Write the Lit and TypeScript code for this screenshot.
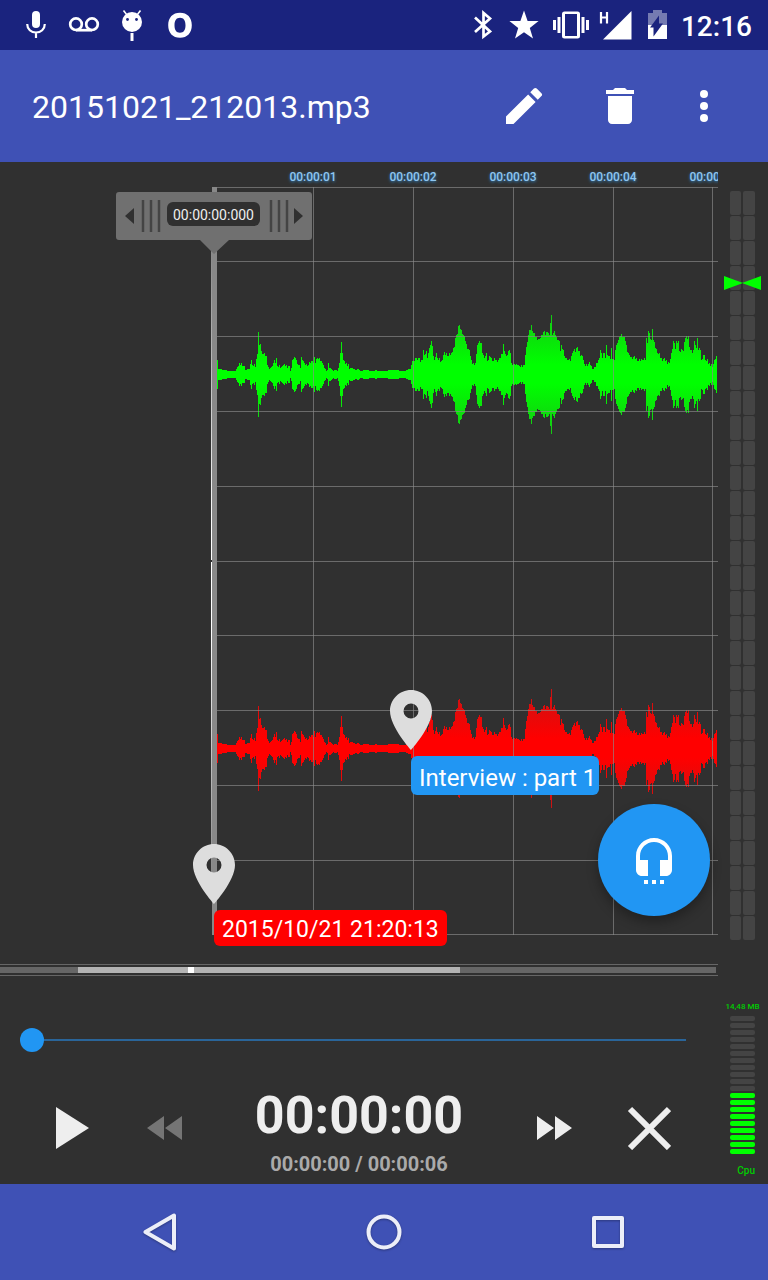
import { LitElement, html, svg, css } from "lit";
import { customElement, property } from "lit/decorators.js";

/* Envelope of the recording: [pixel offset, half height] pairs. */
const ENVELOPE: number[] = [
  0, 14, 1, 5, 8, 4, 10, 3, 18, 3, 20, 7, 24, 11, 26, 8, 28, 4, 32, 5, 34, 14, 35, 9, 38, 7, 40, 20, 41, 42, 42, 29,
  43, 30, 44, 23, 46, 20, 49, 18, 50, 9, 52, 5, 55, 8, 57, 14, 58, 11, 59, 16, 60, 8, 63, 6, 67, 10, 68, 8, 72, 8,
  73, 3, 74, 6, 75, 14, 78, 16, 80, 10, 83, 6, 84, 17, 85, 14, 87, 11, 90, 8, 93, 11, 95, 13, 96, 11, 97, 17, 98, 11,
  100, 16, 103, 13, 105, 11, 107, 6, 109, 3, 110, 4, 111, 11, 112, 6, 114, 5, 116, 3, 118, 4, 120, 3, 121, 6, 122, 11,
  123, 21, 124, 32, 125, 21, 126, 14, 127, 13, 128, 10, 131, 10, 132, 5, 134, 6, 138, 4, 141, 5, 143, 3, 148, 4,
  151, 4, 152, 3, 157, 3, 158, 4, 161, 3, 180, 4, 182, 3, 188, 3, 189, 4, 193, 5, 195, 13, 197, 13, 198, 16, 200, 14,
  201, 16, 203, 12, 205, 14, 206, 24, 207, 19, 209, 23, 210, 16, 212, 26, 213, 29, 214, 33, 215, 28, 216, 18, 217, 14,
  219, 21, 221, 14, 224, 13, 226, 19, 229, 21, 231, 18, 234, 21, 236, 26, 237, 27, 238, 36, 240, 40, 241, 48, 242, 49,
  243, 45, 245, 40, 247, 38, 250, 25, 252, 24, 254, 14, 257, 9, 258, 11, 259, 20, 260, 29, 262, 33, 264, 31, 265, 21,
  267, 16, 269, 21, 270, 13, 273, 17, 275, 13, 278, 14, 280, 12, 282, 16, 285, 20, 286, 30, 287, 23, 289, 18, 291, 23,
  293, 21, 294, 11, 297, 10, 300, 9, 302, 8, 307, 9, 308, 19, 310, 32, 311, 39, 313, 44, 314, 49, 316, 41, 318, 37,
  320, 34, 322, 35, 324, 39, 326, 42, 328, 39, 330, 42, 332, 39, 333, 51, 334, 59, 335, 39, 337, 43, 339, 37, 342, 33,
  343, 23, 344, 29, 346, 24, 347, 18, 350, 14, 353, 13, 355, 21, 356, 23, 358, 22, 360, 27, 361, 23, 363, 18, 365, 18,
  367, 10, 370, 8, 372, 12, 374, 8, 376, 5, 377, 7, 380, 11, 382, 16, 383, 24, 385, 16, 386, 21, 388, 16, 389, 29,
  390, 19, 393, 15, 394, 26, 395, 15, 397, 14, 398, 24, 400, 31, 402, 37, 404, 40, 406, 37, 408, 33, 410, 22, 412, 19,
  415, 15, 417, 18, 420, 13, 425, 14, 428, 14, 429, 36, 430, 31, 431, 43, 433, 35, 434, 34, 435, 45, 436, 34, 438, 26,
  440, 21, 444, 16, 448, 13, 452, 11, 454, 21, 456, 33, 458, 25, 459, 33, 461, 33, 462, 23, 465, 24, 466, 23, 468, 36,
  471, 38, 472, 27, 475, 21, 476, 24, 477, 33, 479, 26, 480, 36, 481, 24, 483, 24, 484, 14, 486, 19, 489, 13, 490, 15,
  491, 10, 493, 8, 496, 10, 497, 14, 499, 18, 500, 18,
];

const LANE_START = 217;

function lanePath(center: number): string {
  let d = "";
  let k = 0;
  for (let i = 0; i < 500; i++) {
    while (k + 4 < ENVELOPE.length && ENVELOPE[k + 2] <= i) k += 2;
    const [x0, a0, x1, a1] = ENVELOPE.slice(k, k + 4);
    const ripple = a0 > 6 && i !== x0 ? ((i * 7) % 5) - 2 : 0;
    const floor = i % 9 === 4 ? 3 : 2;
    const amp = Math.max(floor, Math.round(a0 + ((a1 - a0) * (i - x0)) / (x1 - x0) + ripple));
    d += `M${LANE_START + i} ${center - amp}h1v${amp * 2 + 1}h-1z`;
  }
  return d;
}

const GREEN_LANE = lanePath(187);
const RED_LANE = lanePath(561);
const ROWS = [0, 74, 149, 224, 299, 374, 448, 523, 598, 673, 747];
const COLUMNS = [313, 413, 513, 613, 712];
const SECONDS = ["00:00:01", "00:00:02", "00:00:03", "00:00:04", "00:00:05"];

@customElement("status-bar")
export class StatusBar extends LitElement {
  static styles = css`
    :host { display: flex; height: 50px; background: #1a237e; color: #fff; padding: 0 16px 0 12px; }
    svg { display: block; flex: none; fill: currentColor; }
    .spacer { flex: 1; }
    .clock { font-size: 28px; line-height: 54px; font-weight: 500; }
  `;
  render() {
    return html`
      <svg width="48" height="50" viewBox="12 0 48 50"><rect x="32" y="11" width="8" height="17" rx="4" /><path d="M27.200 24c0 5.200 4 8.500 8.800 8.500s8.800-3.300 8.800-8.500M36 32v6" fill="none" stroke="currentColor" stroke-width="2.200" /></svg>
      <svg width="48" height="50" viewBox="60 0 48 50"><g fill="none" stroke="currentColor" stroke-width="2.700"><circle cx="76" cy="24.200" r="5.800" /><circle cx="92" cy="24.200" r="5.800" /><path d="M76 30.200h16" /></g></svg>
      <svg width="48" height="50" viewBox="108 0 48 50"><circle cx="132" cy="22" r="10" /><path d="M127 15l-3.500-4.500M137 15l3.500-4.500" stroke="currentColor" stroke-width="1.600" /><path d="M130.500 33h3v8h-3z" /><g fill="#1a237e"><circle cx="127.500" cy="19.500" r="1.400" /><circle cx="136.500" cy="19.500" r="1.400" /></g></svg>
      <svg width="48" height="50" viewBox="156 0 48 50"><path fill-rule="evenodd" d="M180 12.700c7.300 0 11.800 4.800 11.800 12.500s-4.500 12.500-11.800 12.500-11.800-4.800-11.800-12.500 4.500-12.500 11.800-12.500zm0 5c-3.600 0-5.500 2.700-5.500 7.500s1.900 7.500 5.500 7.500 5.500-2.700 5.500-7.500-1.900-7.500-5.500-7.500z" /></svg>
      <span class="spacer"></span>
      <svg width="40" height="50" viewBox="463 0 40 50"><path d="M475 17.500l15 14-6.500 5V13l6.500 5.500-15 13.500" fill="none" stroke="currentColor" stroke-width="2.700" /></svg>
      <svg width="42" height="50" viewBox="503 0 42 50"><path d="M524 10.500l3.600 10.400 11 .2-8.800 6.800 3.200 10.600-9-6.300-9 6.300 3.200-10.600-8.800-6.800 11-.2z" /></svg>
      <svg width="52" height="50" viewBox="545 0 52 50"><path fill-rule="evenodd" d="M564.500 11.500h13a2.500 2.500 0 0 1 2.500 2.500v22a2.500 2.500 0 0 1-2.500 2.500h-13a2.500 2.500 0 0 1-2.500-2.500V14a2.500 2.500 0 0 1 2.500-2.500zM565 14v22h12V14z" /><path d="M553 20h3v10h-3zM557.500 17h3v16h-3zM586 20h3v10h-3zM581.500 17h3v16h-3z" /></svg>
      <svg width="38" height="50" viewBox="597 0 38 50"><path d="M631.500 11v28.500H603z" /><path d="M601 12v11.500M607 12v11.500M601 17.500h6" stroke="currentColor" stroke-width="2.200" fill="none" /></svg>
      <svg width="46" height="50" viewBox="635 0 46 50"><path fill-opacity=".4" d="M653 10h9v3h5v12h-19V13h5z" /><path d="M648 25h19v14h-19z" /><path d="M659 15.500v8h4l-9.500 13v-9h-3.500z" fill="#1a237e" /></svg>
      <span class="clock">12:16</span>
    `;
  }
}

@customElement("title-bar")
export class TitleBar extends LitElement {
  @property() heading = "";
  static styles = css`
    :host { display: flex; align-items: center; height: 112px; background: #3f51b5; color: #fff; padding: 0 40px 0 32px; }
    h1 { flex: 1; margin: 0; padding-top: 2px; font-size: 32px; line-height: 40px; font-weight: 400; }
    .action { border: 0; padding: 0; background: none; color: inherit; width: 48px; height: 48px; cursor: pointer; }
    .action svg { display: block; fill: currentColor; }
    .actions { display: flex; gap: 48px; }
    .more { margin-left: -12px; }
  `;
  render() {
    return html`
      <h1>${this.heading}</h1>
      <div class="actions">
        <button class="action" aria-label="Edit"><svg width="48" height="48" viewBox="0 0 24 24"><path d="M3 17.250V21h3.750L17.810 9.940l-3.750-3.750L3 17.250zM20.710 7.040a1 1 0 0 0 0-1.410l-2.340-2.340a1 1 0 0 0-1.410 0l-1.830 1.830 3.750 3.750 1.830-1.830z" /></svg></button>
        <button class="action" aria-label="Delete"><svg width="48" height="48" viewBox="0 0 24 24"><path d="M6 19c0 1.100.9 2 2 2h8c1.100 0 2-.9 2-2V7H6v12zM19 4h-3.500l-1-1h-5l-1 1H5v2h14V4z" /></svg></button>
        <button class="action more" aria-label="More options"><svg width="48" height="48" viewBox="0 0 24 24"><circle cx="12" cy="6" r="2" /><circle cx="12" cy="12" r="2" /><circle cx="12" cy="18" r="2" /></svg></button>
      </div>
    `;
  }
}

@customElement("wave-timeline")
export class WaveTimeline extends LitElement {
  static styles = css`
    :host { display: block; position: relative; }
    .ruler { display: flex; overflow: hidden; height: 25px; padding-left: 263px; }
    .tick { flex: none; width: 100px; text-align: center; font-size: 12px; line-height: 30px; font-weight: 500; color: #90c6f0; text-shadow: 0 1px 3px #2f80c0; }
    .plot { display: block; width: 100%; height: 748px; }
    .grid { stroke: #8c8c8c; stroke-opacity: .65; stroke-width: 1; }
    .lane { shape-rendering: crispEdges; }
    .handle { position: absolute; left: 116px; top: 30px; width: 196px; height: 62px; }
    .handle-shape { display: block; }
    .position { position: absolute; left: 51px; top: 10px; width: 93px; height: 24px; border-radius: 6px; background: #303030; color: #eee; font-size: 14px; line-height: 26px; text-align: center; }
    .pin { position: absolute; }
    .pin svg { display: block; fill: #ddd; }
    .pin-label { position: absolute; top: 66px; left: 21px; white-space: nowrap; color: #fff; border-radius: 6px; }
    .start { left: 193px; top: 682px; }
    .start .pin-label { background: #f00; font-size: 23px; padding: 3px 8px 0 8px; line-height: 33px; }
    .part { left: 390px; top: 528px; }
    .part .pin-label { background: #2196f3; font-size: 24px; padding: 6px 3px 0 8px; line-height: 33px; }
    .listen { position: absolute; right: 8px; top: 642px; width: 112px; height: 112px; padding: 0; border: 0; border-radius: 50%; background: #2196f3; box-shadow: 0 6px 12px rgba(0, 0, 0, .3); display: grid; place-items: center; cursor: pointer; }
    .listen svg { fill: #fff; }
  `;
  private pin(kind: string, label: string) {
    return html`<div class="pin ${kind}">
      <svg width="42" height="60" viewBox="5 2 14 20"><path d="M12 2C8.130 2 5 5.130 5 9c0 5.250 7 13 7 13s7-7.750 7-13c0-3.870-3.130-7-7-7zm0 9.500a2.500 2.500 0 0 1 0-5 2.500 2.500 0 0 1 0 5z" /></svg>
      <span class="pin-label">${label}</span>
    </div>`;
  }
  render() {
    return html`
      <div class="ruler">${SECONDS.map((s) => html`<span class="tick">${s}</span>`)}</div>
      <svg class="plot" role="img" aria-label="Stereo waveform">
        <defs>
          <linearGradient id="g" gradientUnits="userSpaceOnUse" x1="0" y1="127" x2="0" y2="247"><stop offset="0" stop-color="#14c814" /><stop offset=".42" stop-color="#0f0" /><stop offset=".58" stop-color="#0f0" /><stop offset="1" stop-color="#14c814" /></linearGradient>
          <linearGradient id="r" gradientUnits="userSpaceOnUse" x1="0" y1="501" x2="0" y2="621"><stop offset="0" stop-color="#c81414" /><stop offset=".42" stop-color="#f00" /><stop offset=".58" stop-color="#f00" /><stop offset="1" stop-color="#c81414" /></linearGradient>
          <linearGradient id="e" gradientUnits="userSpaceOnUse" x1="0" y1="60" x2="0" y2="690"><stop offset="0" stop-color="#888" /><stop offset=".45" stop-color="#fff" /><stop offset=".6" stop-color="#fff" /><stop offset="1" stop-color="#888" /></linearGradient>
        </defs>
        <path class="lane" d=${GREEN_LANE} fill="url(#g)" />
        <path class="lane" d=${RED_LANE} fill="url(#r)" />
        <g class="grid">
          ${ROWS.map((y) => svg`<line x1="217" x2="100%" y1=${y + 0.5} y2=${y + 0.5} />`)}
          ${COLUMNS.map((x) => svg`<line x1=${x + 0.5} x2=${x + 0.5} y1="0" y2="748" />`)}
        </g>
        <rect x="212" y="0" width="5" height="748" fill="#888" />
        <path d="M211 60h1v313h-1zM211 375h1v315h-1z" fill="url(#e)" />
      </svg>
      <div class="handle">
        <svg class="handle-shape" width="196" height="62" viewBox="0 0 196 62">
          <path d="M3 0h190a3 3 0 0 1 3 3v42a3 3 0 0 1-3 3h-80L98 62 84 48H3a3 3 0 0 1-3-3V3a3 3 0 0 1 3-3z" fill="#707070" />
          <path d="M18 16v16l-9-8zM178 16v16l9-8z" fill="#303030" />
          <path d="M27 8v32M35 8v32M43 8v32M155 8v32M163 8v32M171 8v32" stroke="#444" stroke-width="2.500" />
        </svg>
        <output class="position">00:00:00:000</output>
      </div>
      ${this.pin("part", "Interview : part 1")}
      ${this.pin("start", "2015/10/21 21:20:13")}
      <button class="listen" aria-label="Listen"><svg width="48" height="48" viewBox="0 0 24 24"><path d="M12 1c-4.970 0-9 4.030-9 9v7c0 1.660 1.340 3 3 3h3v-8H5v-2c0-3.870 3.130-7 7-7s7 3.130 7 7v2h-4v8h3c1.660 0 3-1.340 3-3v-7c0-4.970-4.030-9-9-9zM7 22h2v2H7zM11 22h2v2h-2zM15 22h2v2h-2z" /></svg></button>
    `;
  }
}

@customElement("player-controls")
export class PlayerControls extends LitElement {
  static styles = css`
    :host { display: block; }
    .overview { box-sizing: border-box; height: 12px; margin-top: 29px; border: solid #666; border-width: 1px 0; padding: 2px 2px 2px 0; }
    .overview svg { display: block; width: 100%; height: 6px; background: #666; }
    .seek { margin: 52px 32px 20px 20px; display: flex; }
    .seek input { appearance: none; flex: 1; min-width: 0; margin: 0; height: 24px; background: linear-gradient(#2a6599, #2a6599) center / 100% 2px no-repeat; cursor: pointer; }
    .seek input::-webkit-slider-thumb { appearance: none; width: 24px; height: 24px; border-radius: 50%; background: #2196f3; }
    .transport { display: grid; grid-template-columns: 106px 78px 1fr 80px 110px; align-items: center; justify-items: center; height: 112px; padding: 0 14px 0 20px; color: #eee; }
    .key { display: block; border: 0; padding: 0; background: none; color: inherit; cursor: pointer; }
    .key:disabled { color: #757575; }
    .key svg { display: block; fill: currentColor; }
    .times { display: flex; flex-direction: column; align-items: center; padding-top: 8px; }
    .now { font-size: 52px; line-height: 64px; font-weight: 700; }
    .total { font-size: 20px; line-height: 32px; font-weight: 700; color: #aaa; }
  `;
  render() {
    return html`
      <div class="overview"><svg><rect x="78" width="382" height="6" fill="#b3b3b3" /><rect x="188" width="6" height="6" fill="#fff" /></svg></div>
      <label class="seek"><input type="range" min="0" max="6" value="0" aria-label="Seek" /></label>
      <div class="transport">
        <button class="key" aria-label="Play"><svg width="34" height="42"><path d="M0 0l33 21L0 42z" /></svg></button>
        <button class="key" aria-label="Rewind" disabled><svg width="36" height="24"><path d="M17 0v24L0 12zM35 0v24L18 12z" /></svg></button>
        <div class="times"><span class="now">00:00:00</span><span class="total">00:00:00 / 00:00:06</span></div>
        <button class="key" aria-label="Fast forward"><svg width="36" height="24"><path d="M1 0v24l17-12zM19 0v24l17-12z" /></svg></button>
        <button class="key" aria-label="Close"><svg width="44" height="44"><path d="M3 3l39 39M42 3L3 42" stroke="currentColor" stroke-width="6" /></svg></button>
      </div>
    `;
  }
}

@customElement("level-meters")
export class LevelMeters extends LitElement {
  static styles = css`
    :host { display: flex; flex-direction: column; align-items: center; padding-right: 1px; color: #0c0; }
    .levels { position: relative; display: grid; grid-template-columns: 11px 12px; gap: 1px 2px; padding-top: 29px; }
    .levels i { height: 24px; border-radius: 2px; background: #444; }
    .peak { position: absolute; left: -6px; top: 114px; fill: #0f0; }
    .memory { margin-top: 61px; font-size: 8px; line-height: 12px; font-weight: 500; }
    .load { display: grid; gap: 2px; width: 25px; margin-top: 3px; }
    .load i { height: 5px; border-radius: 2px; background: #444; }
    .load .on { background: #0f0; }
    .cpu { margin-top: 11px; width: 25px; text-align: right; font-size: 10px; line-height: 12px; font-weight: 500; }
  `;
  render() {
    return html`
      <div class="levels">
        ${Array.from({ length: 60 }, () => html`<i></i>`)}
        <svg class="peak" width="37" height="14"><path d="M0 0l19 7L0 14zM37 0L18 7l19 7z" /></svg>
      </div>
      <span class="memory">14,48 MB</span>
      <div class="load">${Array.from({ length: 20 }, (_, n) => html`<i class=${n > 10 ? "on" : ""}></i>`)}</div>
      <span class="cpu">Cpu</span>
    `;
  }
}

@customElement("nav-bar")
export class NavBar extends LitElement {
  static styles = css`
    :host { display: grid; grid-template-columns: repeat(3, 1fr); place-items: center; height: 96px; padding: 0 48px; background: #3f51b5; color: #eceef8; }
    button { display: block; border: 0; padding: 0; background: none; color: inherit; cursor: pointer; }
    svg { display: block; fill: none; stroke: currentColor; stroke-width: 4; stroke-linejoin: round; filter: drop-shadow(0 1px 1px rgba(0, 0, 0, .3)); }
  `;
  render() {
    return html`
      <button aria-label="Back"><svg width="40" height="40"><path d="M34 3.500v33L5.500 20z" /></svg></button>
      <button aria-label="Home"><svg width="40" height="40"><circle cx="20" cy="20" r="15.500" /></svg></button>
      <button aria-label="Recent apps"><svg width="40" height="40"><rect x="6" y="6" width="28" height="28" /></svg></button>
    `;
  }
}

@customElement("app-root")
export class AppRoot extends LitElement {
  static styles = css`
    :host { display: flex; flex-direction: column; min-height: 100vh; background: #303030; font-family: Roboto, "Noto Sans", sans-serif; }
    .editor { flex: 1; display: grid; grid-template-columns: minmax(0, 1fr) 50px; align-items: start; }
  `;
  render() {
    return html`
      <status-bar></status-bar>
      <title-bar heading="20151021_212013.mp3"></title-bar>
      <main class="editor">
        <section>
          <wave-timeline></wave-timeline>
          <player-controls></player-controls>
        </section>
        <level-meters></level-meters>
      </main>
      <nav-bar></nav-bar>
    `;
  }
}
